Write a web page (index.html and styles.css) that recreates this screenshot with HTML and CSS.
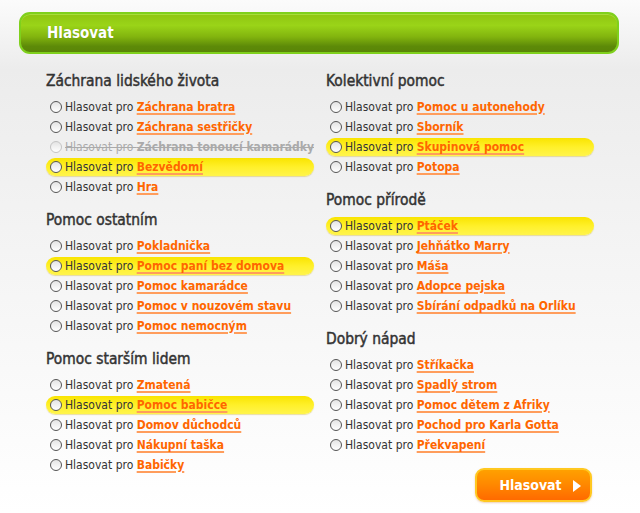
FILE: index.html
```html
<!DOCTYPE html>
<html lang="cs">
<head>
<meta charset="utf-8">
<title>Hlasovat</title>
<link rel="stylesheet" href="styles.css">
</head>
<body>
<div class="page">
  <div class="header"><span class="header-title">Hlasovat</span></div>
  <div class="columns">
    <div class="col">
      <div class="section">
        <h2 class="sec-title">Záchrana lidského života</h2>
        <div class="row"><span class="radio"></span>Hlasovat pro <a class="link" href="#">Záchrana bratra</a></div>
        <div class="row"><span class="radio"></span>Hlasovat pro <a class="link" href="#">Záchrana sestřičky</a></div>
        <div class="row disabled"><span class="radio"></span>Hlasovat pro <a class="link" href="#">Záchrana tonoucí kamarádky</a></div>
        <div class="row hl"><span class="radio"></span>Hlasovat pro <a class="link" href="#">Bezvědomí</a></div>
        <div class="row"><span class="radio"></span>Hlasovat pro <a class="link" href="#">Hra</a></div>
      </div>
      <div class="section">
        <h2 class="sec-title">Pomoc ostatním</h2>
        <div class="row"><span class="radio"></span>Hlasovat pro <a class="link" href="#">Pokladnička</a></div>
        <div class="row hl"><span class="radio"></span>Hlasovat pro <a class="link" href="#">Pomoc paní bez domova</a></div>
        <div class="row"><span class="radio"></span>Hlasovat pro <a class="link" href="#">Pomoc kamarádce</a></div>
        <div class="row"><span class="radio"></span>Hlasovat pro <a class="link" href="#">Pomoc v nouzovém stavu</a></div>
        <div class="row"><span class="radio"></span>Hlasovat pro <a class="link" href="#">Pomoc nemocným</a></div>
      </div>
      <div class="section">
        <h2 class="sec-title">Pomoc starším lidem</h2>
        <div class="row"><span class="radio"></span>Hlasovat pro <a class="link" href="#">Zmatená</a></div>
        <div class="row hl"><span class="radio"></span>Hlasovat pro <a class="link" href="#">Pomoc babičce</a></div>
        <div class="row"><span class="radio"></span>Hlasovat pro <a class="link" href="#">Domov důchodců</a></div>
        <div class="row"><span class="radio"></span>Hlasovat pro <a class="link" href="#">Nákupní taška</a></div>
        <div class="row"><span class="radio"></span>Hlasovat pro <a class="link" href="#">Babičky</a></div>
      </div>
    </div>
    <div class="col">
      <div class="section">
        <h2 class="sec-title">Kolektivní pomoc</h2>
        <div class="row"><span class="radio"></span>Hlasovat pro <a class="link" href="#">Pomoc u autonehody</a></div>
        <div class="row"><span class="radio"></span>Hlasovat pro <a class="link" href="#">Sborník</a></div>
        <div class="row hl"><span class="radio"></span>Hlasovat pro <a class="link" href="#">Skupinová pomoc</a></div>
        <div class="row"><span class="radio"></span>Hlasovat pro <a class="link" href="#">Potopa</a></div>
      </div>
      <div class="section">
        <h2 class="sec-title">Pomoc přírodě</h2>
        <div class="row hl"><span class="radio"></span>Hlasovat pro <a class="link" href="#">Ptáček</a></div>
        <div class="row"><span class="radio"></span>Hlasovat pro <a class="link" href="#">Jehňátko Marry</a></div>
        <div class="row"><span class="radio"></span>Hlasovat pro <a class="link" href="#">Máša</a></div>
        <div class="row"><span class="radio"></span>Hlasovat pro <a class="link" href="#">Adopce pejska</a></div>
        <div class="row"><span class="radio"></span>Hlasovat pro <a class="link" href="#">Sbírání odpadků na Orlíku</a></div>
      </div>
      <div class="section">
        <h2 class="sec-title">Dobrý nápad</h2>
        <div class="row"><span class="radio"></span>Hlasovat pro <a class="link" href="#">Stříkačka</a></div>
        <div class="row"><span class="radio"></span>Hlasovat pro <a class="link" href="#">Spadlý strom</a></div>
        <div class="row"><span class="radio"></span>Hlasovat pro <a class="link" href="#">Pomoc dětem z Afriky</a></div>
        <div class="row"><span class="radio"></span>Hlasovat pro <a class="link" href="#">Pochod pro Karla Gotta</a></div>
        <div class="row"><span class="radio"></span>Hlasovat pro <a class="link" href="#">Překvapení</a></div>
      </div>
      <div class="actions">
        <button class="vote-btn" type="button">Hlasovat<svg class="arrow" width="8" height="12" viewBox="0 0 8 12"><path d="M0 0 L8 6 L0 12 Z" fill="#fff"/></svg></button>
      </div>
    </div>
  </div>
</div>
</body>
</html>
```

FILE: styles.css
```css
html, body {
  margin: 0;
  padding: 0;
}
body {
  width: 640px;
  height: 513px;
  overflow: hidden;
  background: linear-gradient(to bottom, #fbfbfb 0px, #ececec 70px, #f4f4f4 250px, #ffffff 513px);
  font-family: "DejaVu Sans Condensed", "DejaVu Sans", sans-serif;
  color: #333;
}
.page {
  padding-top: 12px;
}
.header {
  margin: 0 21px 0 19px;
  height: 38px;
  border: 2px solid #7fd01c;
  border-radius: 11px;
  background: linear-gradient(to bottom, #8fc511 0%, #9ad418 30%, #82b40e 60%, #5d8a08 85%, #5a8507 100%);
  box-shadow: inset 0 1px 0 #a8dc3a;
  display: flex;
  align-items: center;
  padding-left: 26px;
}
.header-title {
  color: #fff;
  font-weight: bold;
  font-size: 15px;
  text-shadow: 0 0 1px rgba(0,0,0,0.2);
}
.columns {
  display: grid;
  grid-template-columns: 268px 268px;
  column-gap: 12px;
  padding-left: 46px;
  margin-top: 17px;
}
.col {
  display: flex;
  flex-direction: column;
  gap: 13px;
}
.section {
  display: flex;
  flex-direction: column;
}
.sec-title {
  margin: 0 0 6px 0;
  font-size: 15.4px;
  line-height: 20px;
  font-weight: normal;
  -webkit-text-stroke: 0.45px #333;
  color: #333;
}
.row {
  height: 18px;
  line-height: 18px;
  margin: 1px 0;
  padding-left: 4px;
  font-size: 12px;
  color: #333;
  display: flex;
  align-items: center;
  white-space: pre;
  border-radius: 9px;
}
.row.hl {
  background: linear-gradient(to bottom, #f9e400 0%, #fff02a 50%, #fff44c 100%);
  box-shadow: 0 1px 1px rgba(200,170,0,0.35);
}
.radio {
  width: 10px;
  height: 10px;
  border: 1px solid #555;
  border-radius: 50%;
  background: linear-gradient(to bottom, #e4e4e4, #ffffff);
  margin-right: 3px;
  flex: none;
}
.link {
  color: #ff6600;
  font-weight: bold;
  text-decoration: underline;
  text-decoration-color: #ff9d5c;
  text-decoration-thickness: 2px;
  text-underline-offset: 2px;
}
.row.disabled {
  color: #aaa;
  text-decoration: line-through;
}
.row.disabled .radio {
  border-color: #c4c4c4;
}
.row.disabled .link {
  color: #aaa;
  text-decoration: line-through;
  text-decoration-color: #aaa;
  text-decoration-thickness: 1px;
}
.actions {
  display: flex;
  justify-content: flex-end;
  padding-right: 2px;
}
.vote-btn {
  width: 117px;
  height: 34px;
  border: 2px solid #ffc820;
  border-radius: 9px;
  background: linear-gradient(to bottom, #ffa000 0%, #ff8a00 45%, #ff6a00 100%);
  color: #fff;
  font-family: "DejaVu Sans Condensed", "DejaVu Sans", sans-serif;
  font-weight: bold;
  font-size: 14px;
  display: flex;
  align-items: center;
  justify-content: center;
  position: relative;
  padding: 0 6px 0 0;
  box-shadow: 0 1px 2px rgba(200,100,0,0.3);
}
.arrow {
  position: absolute;
  right: 9px;
  top: 10px;
}
```
